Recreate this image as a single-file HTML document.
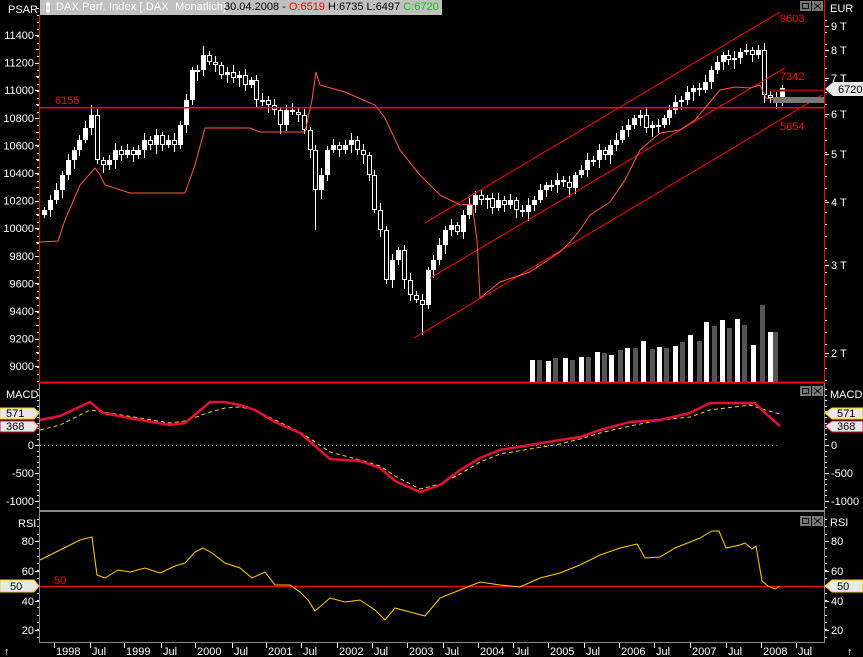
<!DOCTYPE html>
<html><head><meta charset="utf-8"><style>
html,body{margin:0;padding:0;background:#000;width:863px;height:657px;overflow:hidden;position:relative}
svg{display:block}
line,rect{shape-rendering:crispEdges}
text{font-family:"Liberation Sans",sans-serif;font-size:11px;fill:#fff}
.hd{position:absolute;top:0;height:15px;line-height:15px;font-family:"Liberation Sans",sans-serif;white-space:pre;font-size:11px}
</style></head><body>
<svg id="s" width="863" height="657" xmlns="http://www.w3.org/2000/svg">
<rect width="863" height="657" fill="#000"/>
<rect x="40" y="0" width="402" height="15" fill="#c0c0c0"/>
<rect x="46" y="3" width="4" height="9" fill="#fff"/><line x1="48" y1="1" x2="48" y2="14" stroke="#fff"/>
<text x="8" y="13">PSAR</text>
<text x="6" y="398">MACD</text>
<text x="18" y="527">RSI</text>
<g id="g"></g>
</svg>
<div class="hd" style="left:56px;color:#fff;letter-spacing:0.1px">DAX Perf. Index [.DAX  Monatlich]</div>
<div class="hd" style="left:224px;color:#000">30.04.2008 - <span style="color:#f00">O:6519</span> H:6735 L:6497 <span style="color:#0c0">C:6720</span></div>
<script>
var g=document.getElementById('g'),h='';
function L(a,b,c,d,col,w,extra){h+='<line x1="'+a+'" y1="'+b+'" x2="'+c+'" y2="'+d+'" stroke="'+col+'" stroke-width="'+(w||1)+'" '+(extra||'')+'/>';}
function T(x,y,t,col,anchor){h+='<text x="'+x+'" y="'+y+'" style="fill:'+(col||'#fff')+'" text-anchor="'+(anchor||'start')+'">'+t+'</text>';}
function P(pts,col,w,extra){h+='<polyline fill="none" stroke="'+col+'" stroke-width="'+(w||1)+'" '+(extra||'')+' points="'+pts.map(function(p){return p.join(',')}).join(' ')+'"/>';}
L(39.5,15,39.5,382,'#f00');L(824.5,0,824.5,382,'#f00');L(40,382.5,824,382.5,'#f00',2);
L(39.5,383,39.5,643,'#888');L(824.5,383,824.5,643,'#888');L(40,511,824,511,'#888',2);L(40,642.5,824,642.5,'#888');
for(var i=0;i<=12;i++){var y=35+i*27.6;T(34,y+4,(11400-i*200),'#fff','end');L(35,Math.round(y)+.5,39,Math.round(y)+.5,'#fff');if(i<12)L(36,Math.round(y+13.8)+.5,39,Math.round(y+13.8)+.5,'#fff');}
for(var y=8;y<382;y+=6.9){L(37,Math.round(y)+.5,39,Math.round(y)+.5,'#fff');}
var ra=[[26,'9 T'],[50,'8 T'],[78,'7 T'],[114,'6 T'],[154,'5 T'],[202,'4 T'],[265,'3 T'],[353,'2 T']];
ra.forEach(function(r){L(825,r[0]+.5,829,r[0]+.5,'#fff');T(831,r[0]+4,r[1]);});
for(var y=20;y<382;y+=12){L(825,y+.5,827,y+.5,'#fff');}
T(830,12,'EUR');
var cl=[210,200,190,175,160,150,140,128,115,160,165,160,150,155,150,155,150,140,145,135,145,140,145,125,100,70,70,55,62,65,75,72,78,75,85,80,100,100,105,110,125,110,112,115,130,150,190,175,150,145,150,145,140,150,155,175,210,230,280,260,250,280,295,300,305,270,260,245,230,225,232,215,205,195,200,198,208,200,205,200,210,212,205,200,190,185,185,180,182,188,175,170,160,160,150,155,145,140,130,125,118,115,128,125,125,118,110,102,100,92,88,90,82,70,62,55,60,58,52,50,55,50,95,98,100,88];
var op=215;
cl.forEach(function(c,i){var x=Math.round(42+i*5.9);var o=op;var top=Math.min(o,c),bot=Math.max(o,c);if(bot-top<2)bot=top+2;
var hi=top-3-(i*7%5),lo=bot+3+(i*11%7);if(i==8)hi=105;if(i==27)hi=46;if(i==64)lo=335;if(i==46)lo=230;
L(x+2.5,hi,x+2.5,lo,'#fff');
if(c<o)h+='<rect x="'+x+'" y="'+top+'" width="5" height="'+(bot-top)+'" fill="#fff"/>';
else h+='<rect x="'+(x+.5)+'" y="'+(top+.5)+'" width="4" height="'+(bot-top-1)+'" fill="#000" stroke="#fff"/>';
op=c;});
L(40,107.5,824,107.5,'#f00',1.5);T(55,104,'6155','#f00');
L(425,223,780,12,'#f00');L(430,278,785,68,'#f00');L(414,338,822,95,'#f00');
T(780,22,'9603','#f00');T(780,80,'7342','#f00');T(780,130,'5854','#f00');
L(770,90.5,824,90.5,'#900',2);h+='<rect x="773" y="97" width="51" height="6" fill="#777"/>';
h+='<path d="M825,89 L833,82 L863,82 L863,96 L833,96 Z" fill="#e8e8e8"/>';T(838,93,'6720','#000');
var vx=[530,537,546,553,563,570,579,586,595,602,609,618,625,633,641,650,657,664,673,680,688,697,704,712,720,727,735,742,751,760,768,773];
var vh=[360,360,361,358,358,360,357,357,352,353,355,350,348,348,341,349,347,348,346,342,335,341,322,326,320,328,319,325,345,305,332,332];
vx.forEach(function(x,i){h+='<rect x="'+x+'" y="'+vh[i]+'" width="5" height="'+(382-vh[i])+'" fill="'+(i%2?'#555':'#fff')+'"/>';});
P([[40,242],[58,241],[65,220],[80,185],[95,168],[100,175],[105,185],[130,193],[185,193],[195,165],[205,128],[250,128],[260,132],[305,132],[312,100],[316,72],[320,85],[345,92],[375,105],[385,118],[400,150],[420,175],[440,195],[460,205],[472,204],[477,240],[480,298],[490,290],[500,282],[530,272],[545,262],[560,252],[570,242],[580,230],[590,215],[610,202],[625,180],[640,150],[660,133],[680,130],[695,120],[705,108],[720,90],[735,87],[750,88],[760,85],[766,98],[776,100]],'#ff5a40',1);
[[445,'0'],[473,'-500'],[501,'-1000']].forEach(function(m){T(34,m[0]+4,m[1],'#fff','end');L(35,m[0]+.5,39,m[0]+.5,'#fff');L(825,m[0]+.5,829,m[0]+.5,'#fff');T(831,m[0]+4,m[1]);});
for(var y=389;y<510;y+=5.6){L(37,Math.round(y)+.5,39,Math.round(y)+.5,'#fff');L(825,Math.round(y)+.5,827,Math.round(y)+.5,'#fff');}
L(40,445.5,780,445.5,'#888',1,'stroke-dasharray="1,3"');
T(830,398,'MACD');
P([[40,430],[60,425],[90,410],[103,412],[140,418],[170,423],[185,421],[210,412],[225,408],[240,407],[255,410],[275,420],[300,432],[330,452],[360,460],[380,466],[395,476],[420,489],[440,484],[460,474],[480,462],[500,454],[530,449],[560,444],[580,439],[600,433],[630,426],[660,420],[690,417],[710,410],[750,405],[765,410],[780,414]],'#ffd000',1,'stroke-dasharray="4,3"');
P([[40,420],[60,416],[90,402],[103,413],[140,420],[170,425],[185,423],[210,402],[225,402],[240,405],[255,410],[275,422],[300,433],[330,459],[360,461],[380,468],[395,481],[420,492],[440,485],[460,470],[480,458],[500,450],[530,445],[560,440],[580,437],[600,430],[630,422],[660,420],[690,413],[710,403],[755,403],[765,413],[780,426]],'#e0103a',2.5);
h+='<path d="M0,408 L34,408 L39,413 L34,419 L0,419 Z" fill="#e8e8e8" stroke="#ffd000"/>';T(6,417,'571','#000');
h+='<path d="M0,421 L34,421 L39,426 L34,432 L0,432 Z" fill="#e8e8e8" stroke="#e0103a"/>';T(6,430,'368','#000');
h+='<path d="M825,413 L832,408 L863,408 L863,419 L832,419 Z" fill="#e8e8e8" stroke="#ffd000"/>';T(837,417,'571','#000');
h+='<path d="M825,426 L832,421 L863,421 L863,432 L832,432 Z" fill="#e8e8e8" stroke="#e0103a"/>';T(837,430,'368','#000');
[[541,'80'],[571,'60'],[601,'40'],[630,'20']].forEach(function(m){T(34,m[0]+4,m[1],'#fff','end');L(35,m[0]+.5,39,m[0]+.5,'#fff');L(825,m[0]+.5,829,m[0]+.5,'#fff');T(831,m[0]+4,m[1]);});
for(var y=519;y<642;y+=7.35){L(37,Math.round(y)+.5,39,Math.round(y)+.5,'#fff');L(825,Math.round(y)+.5,827,Math.round(y)+.5,'#fff');}
T(830,526,'RSI');
L(40,586.5,824,586.5,'#f00');T(54,584,'50','#f00');
P([[40,560],[60,550],[80,540],[92,537],[97,575],[105,578],[118,570],[130,572],[145,568],[160,573],[175,566],[185,563],[195,552],[203,548],[212,553],[225,563],[240,568],[252,578],[265,572],[275,585],[290,585],[300,592],[308,600],[315,611],[330,598],[345,602],[360,600],[375,610],[385,620],[395,608],[410,612],[425,616],[440,598],[460,590],[480,582],[500,585],[520,587],[540,578],[560,573],[580,565],[600,555],[620,548],[637,544],[645,558],[660,557],[675,548],[690,542],[700,538],[712,531],[719,531],[726,548],[740,545],[745,543],[752,549],[756,546],[762,581],[768,586],[775,589],[780,586]],'#ffd000',1);
h+='<path d="M0,580 L34,580 L39,586 L34,592 L0,592 Z" fill="#e8e8e8" stroke="#ffd000"/>';T(10,590,'50','#000');
h+='<path d="M825,586 L832,580 L863,580 L863,592 L832,592 Z" fill="#e8e8e8" stroke="#ffd000"/>';T(837,590,'50','#000');
[0,385,515].forEach(function(b){var y=b+1;h+='<rect x="800" y="'+y+'" width="11" height="10" fill="#777"/><rect x="802.5" y="'+(y+2.5)+'" width="6" height="5" fill="none" stroke="#111"/><rect x="812" y="'+y+'" width="11" height="10" fill="#777"/>';L(814,y+2,821,y+8,'#111');L(821,y+2,814,y+8,'#111');});
var bl=[[55,'1998'],[91,'Jul'],[125,'1999'],[162,'Jul'],[196,'2000'],[233,'Jul'],[267,'2001'],[302,'Jul'],[338,'2002'],[373,'Jul'],[408,'2003'],[444,'Jul'],[479,'2004'],[514,'Jul'],[549,'2005'],[585,'Jul'],[620,'2006'],[655,'Jul'],[691,'2007'],[727,'Jul'],[762,'2008'],[797,'Jul']];
bl.forEach(function(b){L(b[0]-.5,643,b[0]-.5,648,'#fff');T(b[0]+1,655,b[1]);});
T(4,655,'↑');T(847,655,'↑');
g.innerHTML=h;
</script>
</body></html>
